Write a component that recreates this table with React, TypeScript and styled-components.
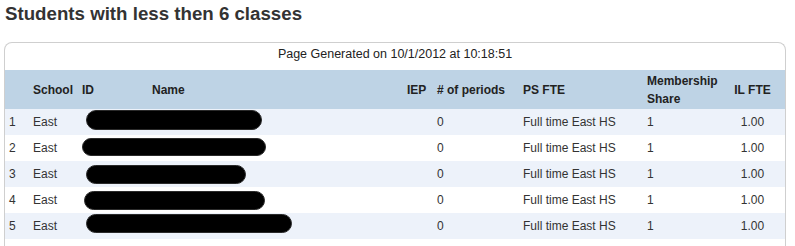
import React from "react";
import styled, { createGlobalStyle } from "styled-components";

const GlobalStyle = createGlobalStyle`
  html, body {
    margin: 0;
    padding: 0;
    background: #ffffff;
    font-family: "Liberation Sans", Arial, Helvetica, sans-serif;
    color: #333333;
  }
`;

const Page = styled.div`
  padding: 2px 0 0 4px;
  width: 791px;
  box-sizing: border-box;
`;

const Title = styled.h1`
  margin: 0 0 16px 0;
  padding-left: 1px;
  font-size: 18.7px;
  line-height: 24px;
  font-weight: bold;
  color: #333333;
`;

const Panel = styled.div`
  width: 782px;
  box-sizing: border-box;
  border: 1px solid #cfcfcf;
  border-bottom: none;
  border-radius: 8px 8px 0 0;
  background: #ffffff;
  padding-bottom: 20px;
`;

const Caption = styled.div`
  padding: 4px 0 8px 0;
  line-height: 15px;
  font-size: 12.5px;
  text-align: center;
  color: #222222;
`;

const COLS = "24px 49px 70px 255px 30px 86px 124px 82px 60px";

const HeaderRow = styled.div`
  display: grid;
  grid-template-columns: ${COLS};
  height: 39px;
  align-items: center;
  background: #bed3e5;
`;

const HeadCell = styled.div<{ $center?: boolean }>`
  padding-left: ${(p) => (p.$center ? "0" : "4px")};
  padding-right: ${(p) => (p.$center ? "5px" : "0")};
  text-align: ${(p) => (p.$center ? "center" : "left")};
  font-size: 12px;
  font-weight: bold;
  line-height: 18px;
  color: #222222;
  white-space: nowrap;
`;

const Row = styled.div<{ $alt: boolean }>`
  display: grid;
  grid-template-columns: ${COLS};
  height: 26px;
  align-items: center;
  background: ${(p) => (p.$alt ? "#edf2fa" : "#ffffff")};
`;

const Cell = styled.div<{ $center?: boolean }>`
  padding-left: ${(p) => (p.$center ? "0" : "4px")};
  padding-right: ${(p) => (p.$center ? "5px" : "0")};
  text-align: ${(p) => (p.$center ? "center" : "left")};
  font-size: 12px;
  line-height: 15px;
  color: #333333;
  white-space: nowrap;
`;

const NameCell = styled.div`
  grid-column: span 2;
  display: flex;
  align-items: center;
  height: 26px;
`;

const Redaction = styled.span`
  display: block;
  height: 19px;
  background: #000000;
  border-radius: 10px;
  border: 1px solid #2a2a2a;
  box-sizing: border-box;
`;

type Student = {
  school: string;
  redact: { left: number; width: number; shift: number; height: number };
};

const students: Student[] = [
  { school: "East", redact: { left: 8, width: 176, shift: -2, height: 20 } },
  { school: "East", redact: { left: 4, width: 184, shift: -1, height: 18 } },
  { school: "East", redact: { left: 8, width: 160, shift: 0, height: 19 } },
  { school: "East", redact: { left: 6, width: 181, shift: 0, height: 19 } },
  { school: "East", redact: { left: 8, width: 206, shift: -3, height: 19 } },
];

export default function App() {
  return (
    <>
      <GlobalStyle />
      <Page>
        <Title>Students with less then 6 classes</Title>
        <Panel>
          <Caption>Page Generated on 10/1/2012 at 10:18:51</Caption>
          <HeaderRow>
            <HeadCell />
            <HeadCell>School</HeadCell>
            <HeadCell>ID</HeadCell>
            <HeadCell>Name</HeadCell>
            <HeadCell>IEP</HeadCell>
            <HeadCell># of periods</HeadCell>
            <HeadCell>PS FTE</HeadCell>
            <HeadCell>
              Membership
              <br />
              Share
            </HeadCell>
            <HeadCell $center>IL FTE</HeadCell>
          </HeaderRow>
          {students.map((s, i) => (
            <Row key={i} $alt={i % 2 === 0}>
              <Cell>{i + 1}</Cell>
              <Cell>{s.school}</Cell>
              <NameCell>
                <Redaction
                  style={{
                    marginLeft: s.redact.left,
                    width: s.redact.width,
                    height: s.redact.height,
                    transform: `translateY(${s.redact.shift}px)`,
                  }}
                />
              </NameCell>
              <Cell />
              <Cell>0</Cell>
              <Cell>Full time East HS</Cell>
              <Cell>1</Cell>
              <Cell $center>1.00</Cell>
            </Row>
          ))}
        </Panel>
      </Page>
    </>
  );
}
